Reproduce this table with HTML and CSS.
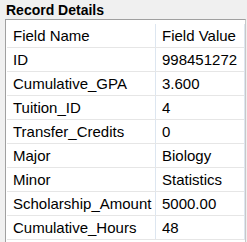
FILE: index.html
```html
<!DOCTYPE html>
<html>
<head>
<meta charset="utf-8">
<link rel="stylesheet" href="styles.css">
</head>
<body>
<div class="title">Record Details</div>
<div class="panel">
  <div class="grid">
    <div class="row">
      <div class="cell name">Field Name</div>
      <div class="cell value">Field Value</div>
    </div>
    <div class="row">
      <div class="cell name">ID</div>
      <div class="cell value">998451272</div>
    </div>
    <div class="row">
      <div class="cell name">Cumulative_GPA</div>
      <div class="cell value">3.600</div>
    </div>
    <div class="row">
      <div class="cell name">Tuition_ID</div>
      <div class="cell value">4</div>
    </div>
    <div class="row">
      <div class="cell name">Transfer_Credits</div>
      <div class="cell value">0</div>
    </div>
    <div class="row">
      <div class="cell name">Major</div>
      <div class="cell value">Biology</div>
    </div>
    <div class="row">
      <div class="cell name">Minor</div>
      <div class="cell value">Statistics</div>
    </div>
    <div class="row">
      <div class="cell name">Scholarship_Amount</div>
      <div class="cell value">5000.00</div>
    </div>
    <div class="row">
      <div class="cell name">Cumulative_Hours</div>
      <div class="cell value">48</div>
    </div>
  </div>
</div>
</body>
</html>
```
FILE: styles.css
```css
html, body {
  margin: 0;
  padding: 0;
}
body {
  width: 247px;
  height: 242px;
  overflow: hidden;
  background: #f0f0f0;
  font-family: "Liberation Sans", Arial, sans-serif;
  color: #000;
}
.title {
  height: 19px;
  line-height: 19px;
  padding-left: 6px;
  font-size: 14px;
  font-weight: bold;
  box-sizing: border-box;
  padding-top: 1px;
}
.panel {
  margin-left: 5px;
  width: 241px;
  height: 230px;
  box-sizing: border-box;
  border-top: 1px solid #a0a0a0;
  border-left: 1px solid #a0a0a0;
  border-right: 1px solid #c8c8c8;
  background: #fff;
  padding: 4px 0 0 1px;
}
.grid {
  display: flex;
  flex-direction: column;
  border-right: 1px solid #dde6f0;
  width: 237px;
}
.row {
  display: grid;
  grid-template-columns: 149px 1fr;
  height: 24px;
  box-sizing: border-box;
  border-bottom: 1px solid #e6e6e6;
}
.cell {
  font-size: 15px;
  line-height: 23px;
  padding-left: 6px;
  white-space: nowrap;
  overflow: hidden;
}
.name {
  border-right: 1px solid #dde6f0;
}
```
